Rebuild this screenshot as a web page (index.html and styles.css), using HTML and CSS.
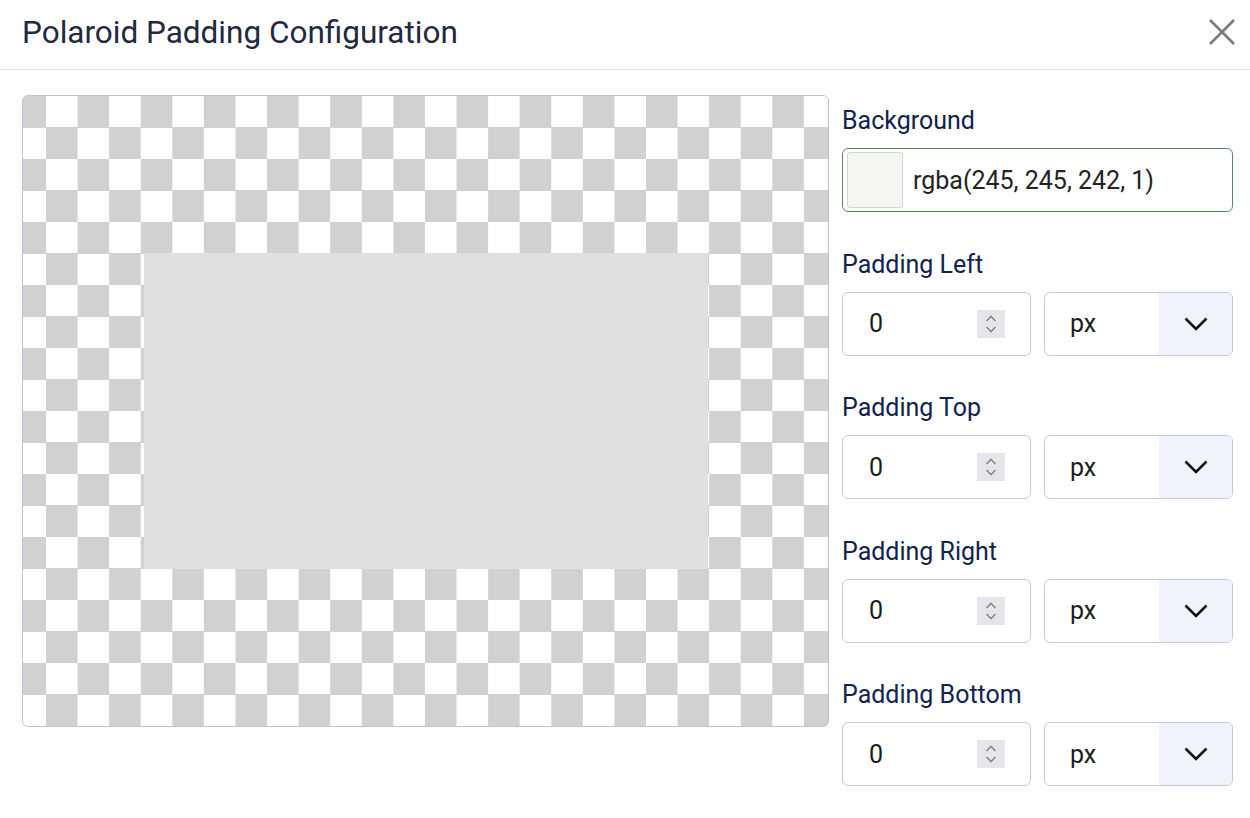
FILE: index.html
```html
<!DOCTYPE html>
<html>
<head>
<meta charset="utf-8">
<link rel="stylesheet" href="styles.css">
</head>
<body>
<div class="dialog">
  <header class="header">
    <h1 class="title">Polaroid Padding Configuration</h1>
    <button class="close" aria-label="Close">
      <svg width="26" height="26" viewBox="0 0 26 26"><path d="M1 1 L25 25 M25 1 L1 25" stroke="#7b7b7b" stroke-width="2.6" fill="none"/></svg>
    </button>
  </header>
  <main class="main">
    <div class="canvas">
      <div class="photo"></div>
    </div>
    <div class="panel">
      <div class="group">
        <label class="label">Background</label>
        <div class="color-input">
          <span class="swatch"></span>
          <span class="color-text">rgba(245, 245, 242, 1)</span>
        </div>
      </div>
      <div class="group">
        <label class="label">Padding Left</label>
        <div class="row">
          <div class="num"><span class="num-val">0</span><span class="spin"><svg width="14" height="22" viewBox="0 0 14 22"><path d="M2.5 8 L7 3.5 L11.5 8 M2.5 14 L7 18.5 L11.5 14" stroke="#8a8a8e" stroke-width="1.6" fill="none"/></svg></span></div>
          <div class="select"><span class="sel-val">px</span><span class="sel-btn"><svg width="24" height="14" viewBox="0 0 24 14"><path d="M1.5 1.5 L12 12 L22.5 1.5" stroke="#111" stroke-width="2.6" fill="none"/></svg></span></div>
        </div>
      </div>
      <div class="group">
        <label class="label">Padding Top</label>
        <div class="row">
          <div class="num"><span class="num-val">0</span><span class="spin"><svg width="14" height="22" viewBox="0 0 14 22"><path d="M2.5 8 L7 3.5 L11.5 8 M2.5 14 L7 18.5 L11.5 14" stroke="#8a8a8e" stroke-width="1.6" fill="none"/></svg></span></div>
          <div class="select"><span class="sel-val">px</span><span class="sel-btn"><svg width="24" height="14" viewBox="0 0 24 14"><path d="M1.5 1.5 L12 12 L22.5 1.5" stroke="#111" stroke-width="2.6" fill="none"/></svg></span></div>
        </div>
      </div>
      <div class="group">
        <label class="label">Padding Right</label>
        <div class="row">
          <div class="num"><span class="num-val">0</span><span class="spin"><svg width="14" height="22" viewBox="0 0 14 22"><path d="M2.5 8 L7 3.5 L11.5 8 M2.5 14 L7 18.5 L11.5 14" stroke="#8a8a8e" stroke-width="1.6" fill="none"/></svg></span></div>
          <div class="select"><span class="sel-val">px</span><span class="sel-btn"><svg width="24" height="14" viewBox="0 0 24 14"><path d="M1.5 1.5 L12 12 L22.5 1.5" stroke="#111" stroke-width="2.6" fill="none"/></svg></span></div>
        </div>
      </div>
      <div class="group">
        <label class="label">Padding Bottom</label>
        <div class="row">
          <div class="num"><span class="num-val">0</span><span class="spin"><svg width="14" height="22" viewBox="0 0 14 22"><path d="M2.5 8 L7 3.5 L11.5 8 M2.5 14 L7 18.5 L11.5 14" stroke="#8a8a8e" stroke-width="1.6" fill="none"/></svg></span></div>
          <div class="select"><span class="sel-val">px</span><span class="sel-btn"><svg width="24" height="14" viewBox="0 0 24 14"><path d="M1.5 1.5 L12 12 L22.5 1.5" stroke="#111" stroke-width="2.6" fill="none"/></svg></span></div>
        </div>
      </div>
    </div>
  </main>
</div>
</body>
</html>
```
FILE: styles.css
```css
* { box-sizing: border-box; }
html, body { margin: 0; padding: 0; background: #fff; }
body { font-family: Roboto, "Liberation Sans", sans-serif; width: 1250px; height: 818px; overflow: hidden; }

.header {
  height: 70px;
  border-bottom: 1px solid #e2e4e8;
  display: flex;
  align-items: center;
  justify-content: space-between;
  padding: 0 15px 0 22px;
}
.title {
  margin: -4px 0 0 0;
  font-size: 31.5px;
  line-height: 40px;
  font-weight: 400;
  color: #1f2a40;
}
.close {
  border: 0;
  background: none;
  padding: 0;
  width: 26px;
  height: 26px;
  display: flex;
  margin-top: -5px;
}

.main {
  display: flex;
  gap: 13px;
  padding: 25px 17px 0 22px;
}

.canvas {
  width: 807px;
  height: 632px;
  border: 1px solid #b9c4da;
  border-radius: 6px;
  overflow: hidden;
  background-color: #fff;
  background-image: conic-gradient(#fff 25%, #d1d1d1 0 50%, #fff 0 75%, #d1d1d1 0);
  background-size: 63.16px 63px;
  background-position: -8.58px 0;
  display: flex;
  align-items: center;
  justify-content: center;
}
.photo {
  width: 564px;
  height: 316px;
  background: #e0e0e0;
  margin-left: 1px;
}

.panel {
  width: 391px;
  display: flex;
  flex-direction: column;
  gap: 37.5px;
  padding-top: 11px;
}
.group {
  display: flex;
  flex-direction: column;
  gap: 12px;
}
.label {
  font-size: 25px;
  line-height: 30px;
  color: #0f2250;
}
.color-input {
  height: 64px;
  border: 1px solid #5b8a5e;
  border-radius: 6px;
  display: flex;
  align-items: center;
  padding-left: 4px;
  gap: 10px;
}
.swatch {
  width: 56px;
  height: 56px;
  background: #f5f5f2;
  border: 1px solid #d3d3d3;
  border-radius: 3px;
}
.color-text {
  font-size: 25px;
  color: #232323;
}
.row {
  display: flex;
  gap: 13px;
}
.num, .select {
  width: 189px;
  height: 64px;
  border: 1px solid #c1cbe0;
  border-radius: 6px;
  display: flex;
  align-items: center;
  overflow: hidden;
}
.num { padding-left: 26px; }
.num-val, .sel-val {
  font-size: 25px;
  color: #1c1c1c;
  flex: 1;
}
.spin {
  width: 28px;
  height: 28px;
  background: #e6e6ea;
  display: flex;
  align-items: center;
  justify-content: center;
  margin-right: 25px;
}
.select { padding-left: 25px; }
.sel-btn {
  width: 73px;
  height: 100%;
  background: #f0f3fb;
  display: flex;
  align-items: center;
  justify-content: center;
}
```
